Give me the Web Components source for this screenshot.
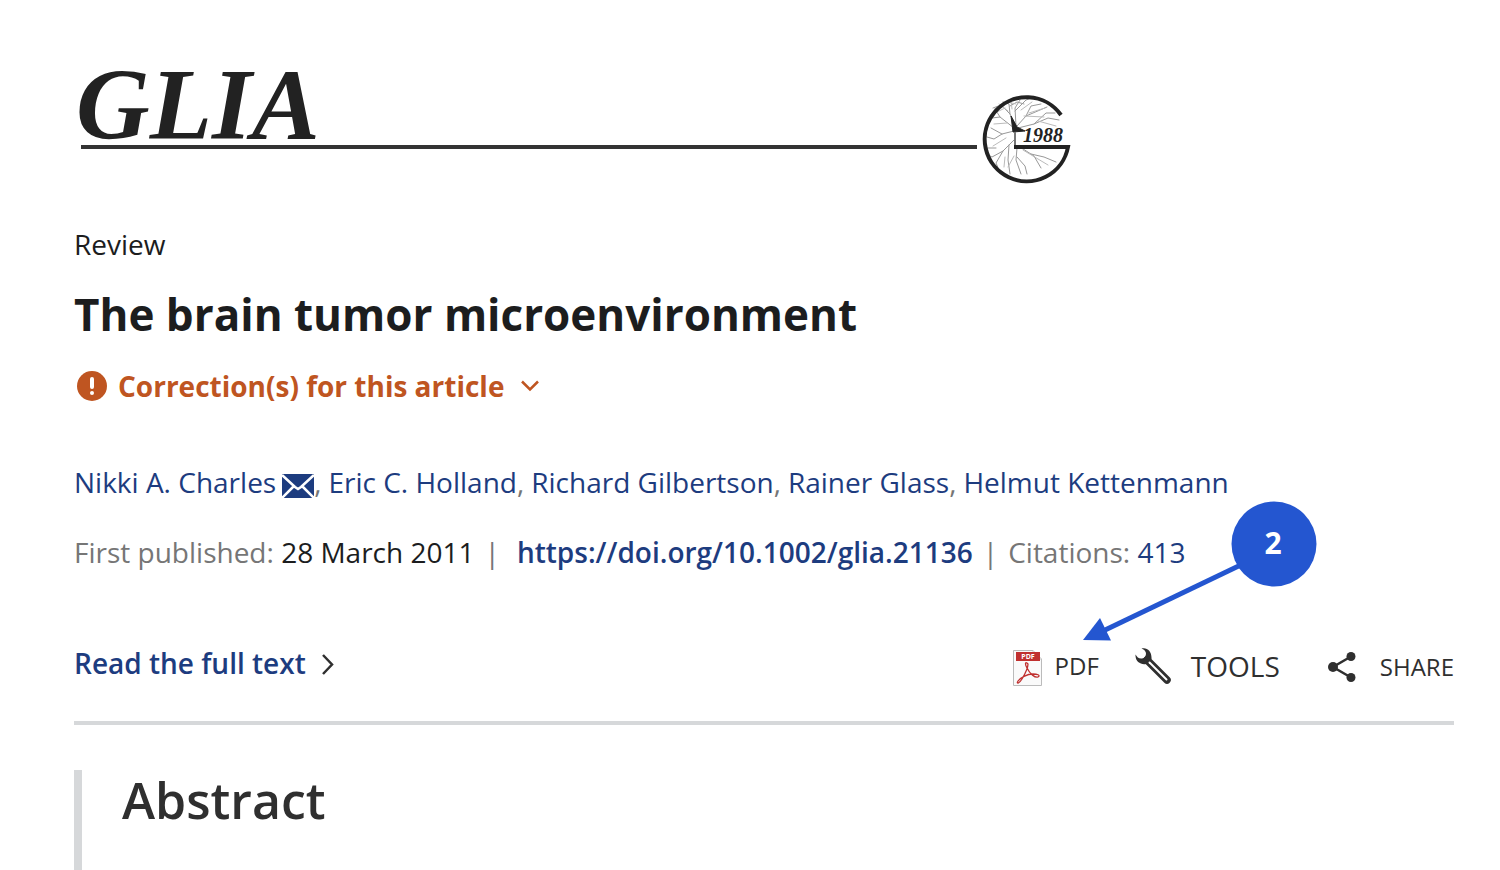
<!DOCTYPE html>
<html lang="en">
<head>
<meta charset="utf-8">
<meta name="viewport" content="width=device-width, initial-scale=1">
<title>The brain tumor microenvironment</title>
<style>
    body {
        margin: 0;
        background: #fff;
        color: #1c1d1e;
        font: 28px/40px "Open Sans", "Noto Sans", sans-serif;
    }
</style>
</head>
<body>
<article-page>
    <journal-masthead></journal-masthead>
    <article-heading category="Review">The brain tumor microenvironment</article-heading>
    <correction-notice>Correction(s) for this article</correction-notice>
    <author-list>
        <author-name corresponding>Nikki A. Charles</author-name>
        <author-name>Eric C. Holland</author-name>
        <author-name>Richard Gilbertson</author-name>
        <author-name>Rainer Glass</author-name>
        <author-name>Helmut Kettenmann</author-name>
    </author-list>
    <article-info published="28 March 2011" doi="https://doi.org/10.1002/glia.21136" citations="413"></article-info>
    <article-toolbar></article-toolbar>
    <article-section heading="Abstract"></article-section>
</article-page>

<script>
class ArticlePage extends HTMLElement {
    constructor() {
        super();
        this.attachShadow({mode: 'open'});
    }

    connectedCallback() {
        this.shadowRoot.innerHTML = `
            <style>
                :host {
                    display: block;
                    padding: 46px 46px 0 74px;
                }
            </style>
            <slot></slot>
        `;
    }
}

class JournalMasthead extends HTMLElement {
    constructor() {
        super();
        this.attachShadow({mode: 'open'});
    }

    connectedCallback() {
        this.shadowRoot.innerHTML = `
            <style>
                :host {
                    display: block;
                    max-width: 1000px;
                    margin-bottom: 38px;
                }
                svg {
                    display: block;
                    width: 100%;
                    overflow: visible;
                }
                text {
                    font-family: "Liberation Serif", serif;
                    font-style: italic;
                    font-weight: bold;
                    fill: #222;
                }
            </style>
            <svg viewBox="0 -20 1000 140" role="img" aria-label="GLIA 1988">
                <text x="2" y="73" font-size="102">GLIA</text>
                <path d="M7 81H903" stroke="#333" stroke-width="4"/>
                <!-- neuron -->
                <g fill="none" stroke="#999" stroke-width="1" stroke-linecap="round">
                    <path d="M942 60L936 48L927 39L919 42M936 48L935 38L929 36M942 60L941 42L946 34M941 45L952 34L955 33M943 60L952 50L966 44L973 41M952 50L957 40L967 38M944 62L960 58L974 52L985 54M960 58L972 47L981 47M940 62L926 51L918 52M926 51L921 43M940 65L928 68L920 73L913 71M928 68L917 62M941 73L929 85L922 97L925 104M929 85L918 91L914 89M935 79L934 94L936 108M943 82L942 94L947 108M943 91L951 100L953 108M946 81L960 90L967 102M957 88L970 91L982 96M922 82L912 82M936 40L943 36L950 38"/>
                    <path stroke="#bbb" d="M931 42L923 46M934 45L925 38M938 43L937 34M947 44L958 36M955 47L971 42M964 55L982 60M933 57L920 58M932 72L919 80M931 91L930 101M940 90L934 101M949 84L974 99M942 38L933 36M950 50L970 51"/>
                </g>
                <path d="M937 50L943 61L951 65L939 66Z" fill="#222" stroke="#222"/>
                <path d="M941 66V80" stroke="#777" stroke-width="2"/>
                <path d="M987 49A42 42 0 1 0 994 81H940" fill="none" stroke="#222" stroke-width="4"/>
                <text x="949" y="76" font-size="20">1988</text>
            </svg>
        `;
    }
}

class ArticleHeading extends HTMLElement {
    constructor() {
        super();
        this.attachShadow({mode: 'open'});
    }

    connectedCallback() {
        this.shadowRoot.innerHTML = `
            <style>
                :host {
                    display: flex;
                    flex-direction: column;
                    gap: 20px;
                    margin-bottom: 22px;
                }
                h1 {
                    margin: 0;
                    font-size: 44px;
                    line-height: 60px;
                    font-weight: 700;
                }
            </style>
            <span>${this.getAttribute('category')}</span>
            <h1><slot></slot></h1>
        `;
    }
}

class CorrectionNotice extends HTMLElement {
    constructor() {
        super();
        this.attachShadow({mode: 'open'});
    }

    connectedCallback() {
        this.shadowRoot.innerHTML = `
            <style>
                :host {
                    display: block;
                    margin-bottom: 56px;
                }
                button {
                    display: flex;
                    align-items: center;
                    padding: 0 0 0 3px;
                    border: 0;
                    background: none;
                    color: #bf5521;
                    font: inherit;
                    font-weight: 700;
                    cursor: pointer;
                }
                .alert {
                    margin-right: 11px;
                }
                .chevron {
                    margin-left: 17px;
                }
            </style>
            <button type="button" aria-expanded="false">
                <svg class="alert" width="30" height="30" viewBox="0 0 30 30" aria-hidden="true">
                    <circle cx="15" cy="15" r="15" fill="currentColor"/>
                    <path d="M15 8V16" stroke="#fff" stroke-width="4" stroke-linecap="round"/>
                    <circle cx="15" cy="22" r="2" fill="#fff"/>
                </svg>
                <slot></slot>
                <svg class="chevron" width="18" height="12" viewBox="0 0 18 12" aria-hidden="true">
                    <path d="M1 1.5L9 9.5L17 1.5" fill="none" stroke="currentColor" stroke-width="2.5"/>
                </svg>
            </button>
        `;
    }
}

class AuthorList extends HTMLElement {
    constructor() {
        super();
        this.attachShadow({mode: 'open'});
    }

    connectedCallback() {
        this.shadowRoot.innerHTML = `
            <style>
                :host {
                    display: flex;
                    flex-wrap: wrap;
                    column-gap: 7px;
                    margin-bottom: 30px;
                    color: #767676;
                }
            </style>
            <slot></slot>
        `;
    }
}

class AuthorName extends HTMLElement {
    constructor() {
        super();
        this.attachShadow({mode: 'open'});
    }

    connectedCallback() {
        const mail = this.hasAttribute('corresponding') ? `
            <a href="#contact" aria-label="Contact the author"><svg width="32" height="24" viewBox="0 0 32 24" aria-hidden="true">
                <path d="M0 0H32V24H0Z" fill="currentColor"/>
                <path d="M0 1L13 13L16 15L19 13L32 1M0 24L12 12M32 24L20 12" fill="none" stroke="#fff" stroke-width="2.5"/>
            </svg></a>` : '';
        const comma = this.nextElementSibling ? ',' : '';

        this.shadowRoot.innerHTML = `
            <style>
                :host {
                    display: flex;
                }
                a {
                    color: #1d3c7f;
                    text-decoration: none;
                }
                svg {
                    display: block;
                    margin: 12px 0 0 6px;
                }
            </style>
            <a href="#author"><slot></slot></a>${mail}<span>${comma}</span>
        `;
    }
}

class ArticleInfo extends HTMLElement {
    constructor() {
        super();
        this.attachShadow({mode: 'open'});
    }

    connectedCallback() {
        const doi = this.getAttribute('doi');
        this.shadowRoot.innerHTML = `
            <style>
                :host {
                    display: flex;
                    flex-wrap: wrap;
                    margin-bottom: 71px;
                    color: #767676;
                }
                time {
                    color: #1c1d1e;
                }
                a {
                    color: #1d3c7f;
                    text-decoration: none;
                }
                .doi {
                    font-weight: 600;
                }
                .first {
                    margin: 0 17px 0 10px;
                }
                .second {
                    margin: 0 10px;
                }
            </style>
            <span>First published: <time datetime="2011-03-28">${this.getAttribute('published')}</time></span>
            <span class="first">|</span>
            <a class="doi" href="${doi}">${doi}</a>
            <span class="second">|</span>
            <span>Citations: <a href="#citedby">${this.getAttribute('citations')}</a></span>
        `;
    }
}

class StepCallout extends HTMLElement {
    constructor() {
        super();
        this.attachShadow({mode: 'open'});
    }

    connectedCallback() {
        this.shadowRoot.innerHTML = `
            <style>
                :host {
                    display: block;
                    pointer-events: none;
                }
                svg {
                    display: block;
                }
                text {
                    font-size: 30px;
                    font-weight: 700;
                }
            </style>
            <svg width="234" height="140" viewBox="0 0 234 140">
                <path d="M20 130L191 48" stroke="#2456d0" stroke-width="5"/>
                <path d="M0 139L17 117L28 139.5Z" fill="#2456d0"/>
                <circle cx="191" cy="43" r="42.5" fill="#2456d0"/>
                <text x="190" y="53" text-anchor="middle" fill="#fff">${this.getAttribute('step')}</text>
            </svg>
        `;
    }
}

class ArticleToolbar extends HTMLElement {
    constructor() {
        super();
        this.attachShadow({mode: 'open'});
    }

    connectedCallback() {
        this.shadowRoot.innerHTML = `
            <style>
                :host {
                    display: flex;
                    justify-content: space-between;
                    padding-bottom: 34px;
                    border-bottom: 4px solid #d6d8da;
                }
                a, button {
                    display: flex;
                    align-items: center;
                    color: #2f2f2f;
                    text-decoration: none;
                }
                button {
                    padding: 0;
                    border: 0;
                    background: none;
                    font: inherit;
                    cursor: pointer;
                }
                .read {
                    gap: 15px;
                    height: 40px;
                    color: #1d3c7f;
                    font-weight: 600;
                }
                .tools {
                    display: flex;
                    align-items: center;
                    padding-top: 2px;
                }
                .pdf {
                    position: relative;
                    gap: 13px;
                    margin-right: 36px;
                    font-size: 24px;
                }
                .menu {
                    gap: 20px;
                    margin-right: 48px;
                }
                .share {
                    gap: 24px;
                    padding-top: 2px;
                    font-size: 24px;
                }
                step-callout {
                    position: absolute;
                    left: 71px;
                    bottom: 45px;
                }
            </style>
            <a class="read" href="#full">Read the full text
                <svg width="14" height="26" viewBox="0 0 14 26" aria-hidden="true">
                    <path d="M2 5L11 14.5L2 24" fill="none" stroke="#2f2f2f" stroke-width="2.5"/>
                </svg>
            </a>
            <div class="tools">
                <a class="pdf" href="#pdf">
                    <svg width="30" height="40" viewBox="-1 -4 30 40" aria-hidden="true">
                        <path d="M.5 .5H20L28.5 9V35.5H.5Z" fill="#fafafa" stroke="#bbb"/>
                        <path d="M20 .5V9H28.5" fill="#eee" stroke="#ccc"/>
                        <path d="M3 2H27V11H3Z" fill="#c0302f"/>
                        <text x="15" y="9" font-size="7" font-weight="700" text-anchor="middle" fill="#fff">PDF</text>
                        <path d="M14 13C12 12 12 14 14 18C17 24 22 28 25 27C28 25 24 24 20 24C14 24 7 28 5 31C3 34 6 34 9 29C12 24 15 17 15 14Z" fill="none" stroke="#c0302f" stroke-width="1.3"/>
                    </svg>
                    PDF
                    <step-callout step="2"></step-callout>
                </a>
                <button class="menu" type="button">
                    <svg width="36" height="36" viewBox="0 0 36 36" aria-hidden="true">
                        <path d="M6.5 .5C12 -1 17 3 16.5 11L11 16C6 17 0 14 .5 6.5C2 9 4 11 7 10.5C11 10 12 5 10 3C9 1.5 8 1 6.5 .5Z" fill="#2f2f2f"/>
                        <path d="M12 12L32 32" stroke="#2f2f2f" stroke-width="7.5" stroke-linecap="round"/>
                        <path d="M14.5 14.5L31.5 31.5" stroke="#fff" stroke-width="2" stroke-linecap="round"/>
                    </svg>
                    TOOLS
                </button>
                <button class="share" type="button">
                    <svg width="28" height="30" viewBox="0 0 28 30" aria-hidden="true">
                        <path d="M23 4.5L5 15L23 25.5" fill="none" stroke="#2f2f2f" stroke-width="2.5"/>
                        <circle cx="23" cy="4.5" r="4.5" fill="#2f2f2f"/>
                        <circle cx="5" cy="15" r="5" fill="#2f2f2f"/>
                        <circle cx="23" cy="25.5" r="4.5" fill="#2f2f2f"/>
                    </svg>
                    SHARE
                </button>
            </div>
        `;
    }
}

class ArticleSection extends HTMLElement {
    constructor() {
        super();
        this.attachShadow({mode: 'open'});
    }

    connectedCallback() {
        this.shadowRoot.innerHTML = `
            <style>
                :host {
                    display: block;
                    margin-top: 45px;
                    padding: 0 0 40px 40px;
                    border-left: 8px solid #d6d8da;
                }
                h2 {
                    margin: 0;
                    color: #2f2f2f;
                    font-size: 50px;
                    line-height: 60px;
                    font-weight: 600;
                }
            </style>
            <h2>${this.getAttribute('heading')}</h2>
            <slot></slot>
        `;
    }
}

customElements.define('article-page', ArticlePage);
customElements.define('journal-masthead', JournalMasthead);
customElements.define('article-heading', ArticleHeading);
customElements.define('correction-notice', CorrectionNotice);
customElements.define('author-list', AuthorList);
customElements.define('author-name', AuthorName);
customElements.define('article-info', ArticleInfo);
customElements.define('step-callout', StepCallout);
customElements.define('article-toolbar', ArticleToolbar);
customElements.define('article-section', ArticleSection);
</script>
</body>
</html>
